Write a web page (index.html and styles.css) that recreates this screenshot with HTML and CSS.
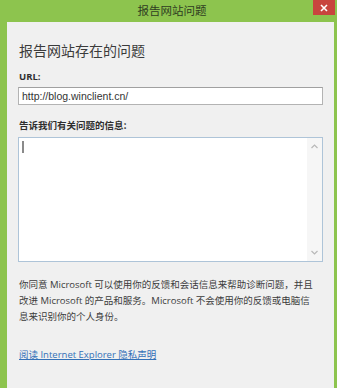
FILE: index.html
```html
<!DOCTYPE html>
<html lang="zh-CN">
<head>
<meta charset="utf-8">
<title>报告网站问题</title>
<link rel="stylesheet" href="styles.css">
</head>
<body>
<div class="window">
  <div class="titlebar">
    <span class="title">报告网站问题</span>
    <button class="close" aria-label="关闭">
      <svg width="8" height="8" viewBox="0 0 8 8"><path d="M1 1L7 7M7 1L1 7" stroke="#fff" stroke-width="1.6"/></svg>
    </button>
  </div>
  <div class="panel">
    <h1 class="heading">报告网站存在的问题</h1>
    <div class="label">URL:</div>
    <div class="input">http://blog.winclient.cn/</div>
    <div class="label label2">告诉我们有关问题的信息:</div>
    <div class="textarea">
      <div class="text-area-body"><span class="caret"></span></div>
      <div class="scrollbar">
        <svg width="7" height="5" viewBox="0 0 7 5"><path d="M0.5 4L3.5 1L6.5 4" fill="none" stroke="#b9b9b9" stroke-width="1.2"/></svg>
        <svg width="7" height="5" viewBox="0 0 7 5"><path d="M0.5 1L3.5 4L6.5 1" fill="none" stroke="#b9b9b9" stroke-width="1.2"/></svg>
      </div>
    </div>
    <p class="notice">你同意 Microsoft 可以使用你的反馈和会话信息来帮助诊断问题，并且<br>改进 Microsoft 的产品和服务。Microsoft 不会使用你的反馈或电脑信<br>息来识别你的个人身份。</p>
    <a class="link" href="#">阅读 Internet Explorer 隐私声明</a>
  </div>
</div>
</body>
</html>
```

FILE: styles.css
```css
html, body {
  margin: 0;
  padding: 0;
}
body {
  width: 337px;
  height: 388px;
  overflow: hidden;
  font-family: "Open Sans", "Noto Sans CJK SC", sans-serif;
  color: #3a3a3a;
}
.window {
  height: 388px;
  background: #8dc44e;
  display: flex;
  flex-direction: column;
}
.titlebar {
  position: relative;
  height: 22px;
  flex: none;
  display: flex;
  align-items: center;
  justify-content: center;
  padding-left: 7px;
}
.title {
  font-family: "Noto Sans CJK SC", sans-serif;
  font-size: 11.5px;
  color: #2f3d22;
  line-height: 14px;
  margin-top: -2px;
}
.close {
  position: absolute;
  right: 2px;
  top: 0;
  width: 22px;
  height: 15px;
  border: 0;
  padding: 0;
  background: #c8453e;
  display: flex;
  align-items: center;
  justify-content: center;
}
.panel {
  flex: 1;
  margin: 0 3px 0 7px;
  background: #f0f0f0;
  padding: 18px 11px 0 11px;
}
.heading {
  margin: 0 0 0 1px;
  font-family: "Noto Sans CJK SC", sans-serif;
  font-weight: normal;
  font-size: 14px;
  line-height: 20px;
  color: #3b3b3b;
}
.label {
  margin: 10px 0 4px 1px;
  font-size: 9.5px;
  font-weight: bold;
  line-height: 13px;
  color: #2e2e2e;
}
.label2 {
  margin-top: 14px;
  font-family: "Noto Sans CJK SC", sans-serif;
  margin-bottom: 5px;
}
.input {
  height: 16px;
  border: 1px solid #b3b3b3;
  border-top-color: #a0a0a0;
  background: #fff;
  font-family: "Liberation Sans", sans-serif;
  font-size: 10.5px;
  line-height: 16px;
  padding-left: 3px;
  color: #333;
}
.textarea {
  height: 123px;
  border: 1px solid #aec4d8;
  background: #fff;
  display: flex;
}
.text-area-body {
  flex: 1;
  padding: 3px 0 0 3px;
}
.caret {
  display: block;
  width: 2px;
  height: 12px;
  background: #8a8a8a;
}
.scrollbar {
  width: 15px;
  background: #f6f6f6;
  display: flex;
  flex-direction: column;
  justify-content: space-between;
  align-items: center;
  padding: 6px 0 6px;
}
.notice {
  margin: 15px 0 0 1px;
  font-size: 9.5px;
  line-height: 16px;
  color: #3c3c3c;
}
.link {
  display: inline-block;
  margin: 22px 0 0 1px;
  font-size: 9.5px;
  line-height: 16px;
  color: #3471b8;
  text-decoration: underline;
}
```
